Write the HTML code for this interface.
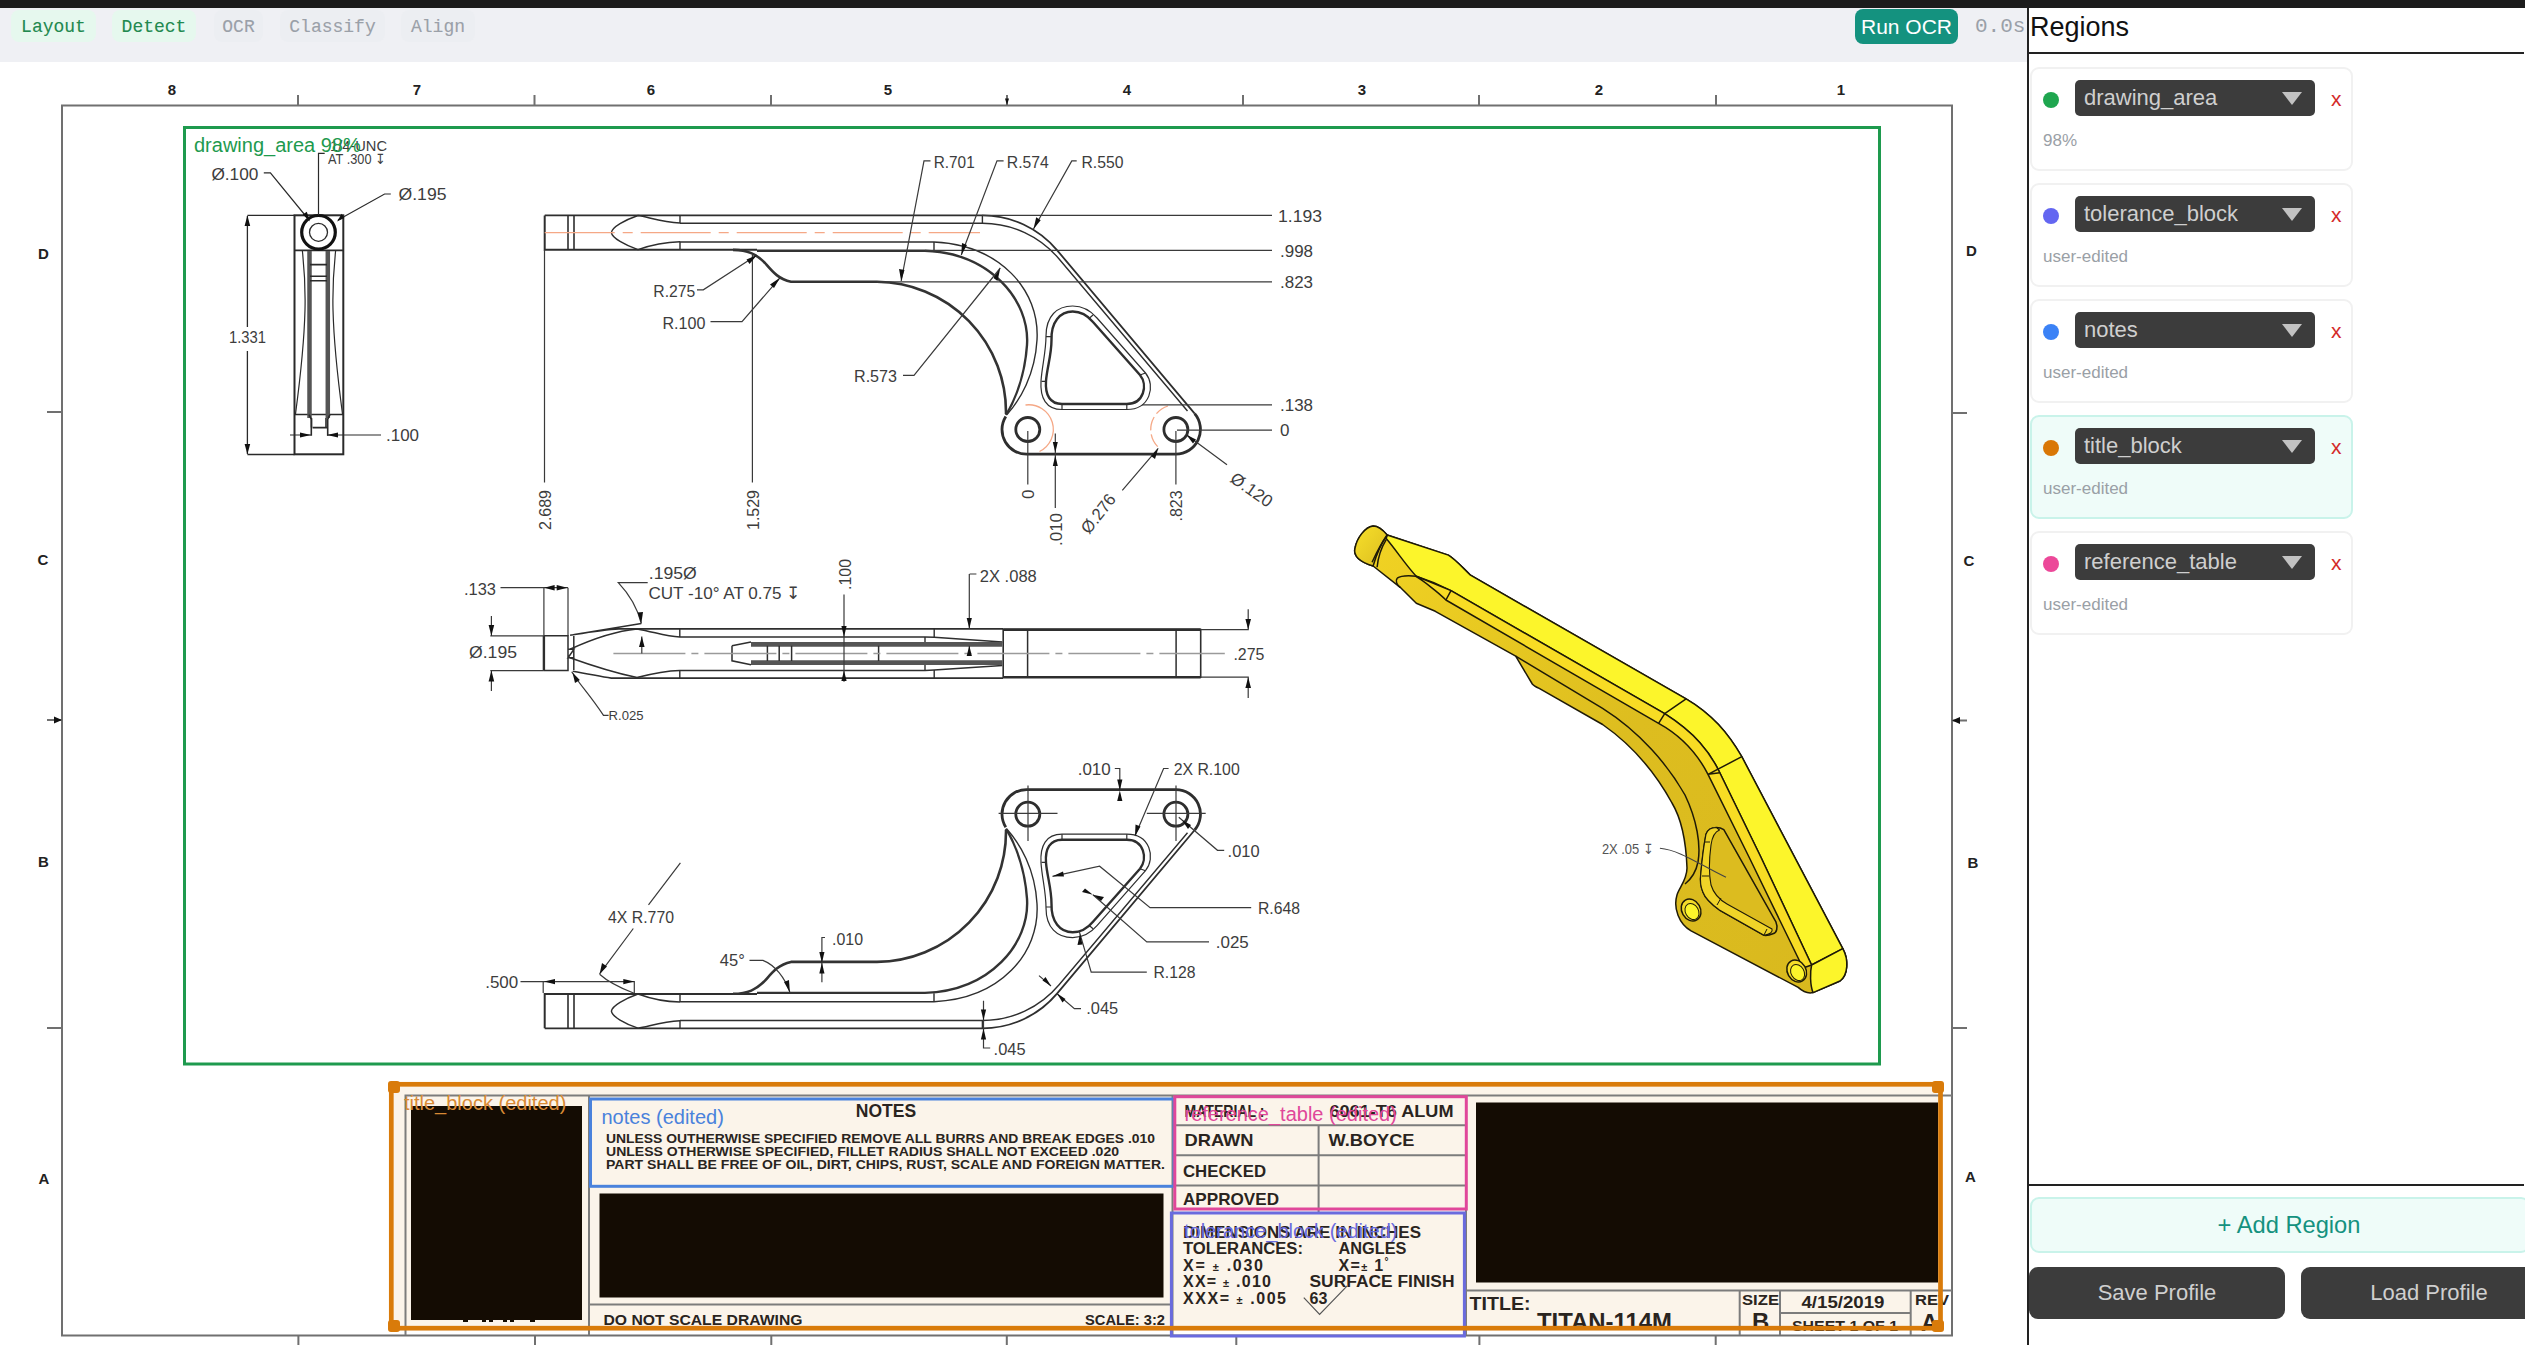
<!DOCTYPE html>
<html><head><meta charset="utf-8">
<style>
*{box-sizing:border-box;margin:0;padding:0}
html,body{width:2525px;height:1345px;overflow:hidden;background:#fff;font-family:"Liberation Sans",sans-serif}
.abs{position:absolute}
#topbar{left:0;top:0;width:2525px;height:8px;background:#1c1c1c}
#toolbar{left:0;top:8px;width:2028px;height:54px;background:#eff0f4}
.tb{position:absolute;top:10px;height:32px;border-radius:8px;font-family:"Liberation Mono",monospace;font-size:18px;line-height:35px;text-align:center;-webkit-text-stroke:0.1px currentColor}
.tb.on{background:#e6f8ee;color:#22894f}
.tb.off{background:#eceef2;color:#9aa0a8}
#runocr{left:1855px;top:9px;width:103px;height:35px;border-radius:8px;background:#14927f;color:#fff;font-size:21px;line-height:35px;text-align:center}
#time{left:1975px;top:9px;height:35px;line-height:35px;font-family:"Liberation Mono",monospace;font-size:21px;color:#9aa0a8;width:53px;overflow:hidden;white-space:nowrap}
#sidebar{left:2027px;top:8px;width:498px;height:1337px;background:#fff;border-left:2px solid #222}
#reghead{left:2030px;top:8px;font-size:27px;color:#111;line-height:38px}
#regline{left:2029px;top:52px;width:495px;height:2px;background:#222}
.card{position:absolute;left:2030px;width:323px;height:104px;border:2px solid #f1f1f1;border-radius:9px;background:#fff}
.card.sel{background:#effcf9;border-color:#c9f3ea}
.dot{position:absolute;left:11px;top:23px;width:16px;height:16px;border-radius:50%}
.sel2{position:absolute;left:43px;top:11px;width:240px;height:36px;border-radius:5px;background:#3c3c3c;color:#cfcfcf;font-size:22px;line-height:36px;padding-left:9px}
.tri{position:absolute;left:207px;top:12px;width:0;height:0;border-left:10px solid transparent;border-right:10px solid transparent;border-top:13px solid #c2c2c2}
.x{position:absolute;left:299px;top:12px;color:#d42a2a;font-size:21px;line-height:36px}
.sub{position:absolute;left:11px;top:60px;color:#9aa0a6;font-size:17px;line-height:24px}
#botline{left:2029px;top:1184px;width:495px;height:2px;background:#222}
#addreg{left:2030px;top:1197px;width:500px;height:56px;border:2px solid #c9f3ea;border-radius:9px;background:#effcf9;color:#14927f;font-size:23.7px;line-height:52px;text-align:center;padding-left:18px}
.pbtn{position:absolute;top:1267px;height:52px;border-radius:9px;background:#3c3c3c;color:#cfcfcf;font-size:22px;line-height:52px;text-align:center}
svg text{font-family:"Liberation Sans",sans-serif}
</style></head><body>
<!-- DRAWING -->
<svg class="abs" style="left:0;top:0" width="2028" height="1345" viewBox="0 0 2028 1345">
<g id="frame" fill="none" stroke="#707070" stroke-width="2">
  <path d="M62 1335.5 V105.5 H1952 V1335.5 Z"/>
  <path d="M298 95V105M534.5 95V105M771 95V105M1243 95V105M1479 95V105M1716 95V105M1007 95V105"/>
  <path d="M298.4 1335V1345M535 1335V1345M771.3 1335V1345M1006.8 1335V1345M1236.3 1335V1345M1479.4 1335V1345M1715.7 1335V1345"/>
  <path d="M47 412H62M47 720H62M47 1028H62M1952 413H1967M1952 720.5H1967M1952 1028H1967"/>
</g>
<g fill="#111"><path d="M1005 98.5L1009 98.5L1007 105Z"/><path d="M54 716.5L62 720L54 723.5Z"/><path d="M1960 717L1952 720.5L1960 724Z"/></g>
<g font-size="15" font-weight="bold" fill="#222" text-anchor="middle">
  <text x="172" y="95">8</text><text x="417" y="95">7</text><text x="651" y="95">6</text><text x="888" y="95">5</text>
  <text x="1127" y="95">4</text><text x="1362" y="95">3</text><text x="1599" y="95">2</text><text x="1841" y="95">1</text>
  <text x="43.5" y="259">D</text><text x="43" y="565">C</text><text x="43.5" y="867">B</text><text x="44" y="1184">A</text>
  <text x="1971.5" y="255.5">D</text><text x="1969" y="566">C</text><text x="1973" y="868">B</text><text x="1970.5" y="1181.5">A</text>
</g>


<!-- SIDE VIEW -->
<g id="side" fill="none" stroke="#2a2a2a" stroke-width="1.6">
  <rect x="294.5" y="215.3" width="48.8" height="239" stroke-width="2"/>
  <path d="M294.5 250.4H343.3M294.5 414.5H343.3"/>
  <circle cx="318.5" cy="232.3" r="16.8" stroke-width="3.2" stroke="#111"/>
  <circle cx="318.5" cy="232.3" r="9" stroke-width="1.3"/>
  <path d="M309.5 251V418M327.8 251V418" stroke-width="4.5" stroke="#555"/><path d="M311.5 418V427.6M326 418V427.6" stroke-width="1.6"/>
  <path d="M312.6 427.6H327.5M309 414.5L311.3 419.3V435.8M330 414.5L327.7 419.3V435.8M310 264.6H327M310 276.2H327M310 280.8H327" stroke-width="1.6"/>
  <path d="M302.4 251C306 285 308 320 295.5 414M335.6 251C332 285 330 320 342.5 414" stroke-width="1.2"/>
  <path d="M247.4 215.3H294.5M247.4 454.5H294.5M247.4 216V327M247.4 351V454" stroke-width="1.3"/>
  <path d="M318.5 215V153.3H324.7M263.8 172.8H270.4L309 220M390.8 194H384.6L338 220M290 435H311M327 435H381" stroke-width="1.2"/>
</g>
<g fill="#111">
  <path d="M247.4 215.5L244.6 226L250.2 226Z"/><path d="M247.4 454.3L244.6 444L250.2 444Z"/>
  <path d="M311 435L300 432.5V437.5Z"/><path d="M327 435L338 432.5V437.5Z"/>
  <path d="M310 221.5L302.8 214.5L306.8 211.7Z"/><path d="M337 221.5L341.7 213.7L344.3 218Z"/>
</g>
<g font-size="17" fill="#3d3d3d">
  <text x="229" y="343.3" textLength="37" lengthAdjust="spacingAndGlyphs">1.331</text>
  <text x="386" y="441" textLength="33" lengthAdjust="spacingAndGlyphs">.100</text>
  <text x="211.4" y="179.5" textLength="47" lengthAdjust="spacingAndGlyphs">Ø.100</text>
  <text x="398.5" y="200.4" textLength="48" lengthAdjust="spacingAndGlyphs">Ø.195</text>
  <text x="328" y="163.8" font-size="14" textLength="58" lengthAdjust="spacingAndGlyphs">AT .300 ↧</text>
  <text x="330" y="150.5" font-size="14" textLength="57" lengthAdjust="spacingAndGlyphs">1/4-UNC</text>
</g>

<!-- TOP VIEW -->
<g id="part" fill="none" stroke="#2e2e2e" stroke-width="1.8">
  <path d="M544.7 215.4H982.4A97.4 97.4 0 0 1 1057 250.1L1194.7 413.7"/><path d="M1194.7 413.7A24.6 24.6 0 0 1 1175.9 454.1H1027.8A24.6 24.6 0 0 1 1005.8 416.4" stroke-width="2.8"/>
  <path d="M544.7 215.4V249.7H757" stroke-width="2"/>
  <path d="M568 215.4V249.7M574 215.4V249.7" stroke-width="1.6"/>
  <path d="M680 223C662 222 648 217 638 215.5C625 220 612 227 611.4 232.6C612 238 625 245 638 249.7C648 246 662 242 680 241.7" stroke-width="1.4"/>
  <path d="M680 215.5V223M680 241.7V249.7M982.4 215.4V223.3M934 242.1V250.4" stroke-width="1.4"/>
  <path d="M680 223.2H982.4A100.2 100.2 0 0 1 1059.1 259L1187.5 411" stroke-width="1.4"/>
  <path d="M680 242H934C1000 245 1040 290 1037 340C1035 375 1020 400 1007 414.5" stroke-width="1.4"/>
  <path d="M733 249.9C748 250 756 254 765 263C772 271 778 279 791 281.8H877A130.3 130.3 0 0 1 1006 414" stroke-width="2.6" stroke="#333"/>
  <path d="M757 250.8H924.9C990 253 1030 300 1027 345C1025 375 1015 400 1006 415" stroke-width="2.4" stroke="#333"/>
  <path d="M1051.5 340C1051 322 1060 311.5 1072.7 311.5C1082 311.5 1088 316 1093 322L1140 375C1148 385 1144 404 1126.8 404H1062C1050 404 1045 395 1046 381C1047 368 1051.5 355 1051.5 340Z" stroke-width="2.4"/>
  <path d="M1046 336C1046 316 1057 306 1072.7 306C1084 306 1091 311 1097 318L1145.5 373C1156 386 1150 409.5 1126.8 409.5H1062C1046 409.5 1040 398 1041 381C1042 366 1046 352 1046 336Z" stroke-width="1.2"/>
  <path d="M1062 404V409.5M1126.8 404V409.5M1046 336.7H1051.6M1041.5 381.3H1046.5M1089 318.5L1093 315M1140 375L1145.5 373" stroke-width="1.2"/>
  <circle cx="1027.8" cy="429.5" r="12" stroke-width="2.8"/>
  <circle cx="1175.9" cy="429.5" r="12" stroke-width="2.8"/>
</g>
<use href="#part" transform="matrix(1 0 0 -1 0 1243.7)"/>
<g fill="none" stroke="#f5a886" stroke-width="1.3">
  <path d="M544.7 232.6H980" stroke-width="1.4" stroke-dasharray="70 8 10 8"/>
  <path d="M1025.5 405A24.6 24.6 0 0 1 1039.5 451.5"/>
  <path d="M1168 406A24.6 24.6 0 0 0 1159.6 448.4" stroke-dasharray="14 4"/>
</g>
<g id="topdims" fill="none" stroke="#3a3a3a" stroke-width="1.2">
  <path d="M982 215.4H1272M925 250.4H1272M877 281.8H1272M1142 404.8H1272M1177 430.1H1272M903 375.3H914L1000.3 268"/>
  <path d="M544.5 250V482.5M752.4 255V482.5M1027.8 431V484.4M1055.3 433.4V508M1175.9 431V484.4"/>
  <path d="M930.5 160.9H924L901.2 281M1003.6 160.9H997L961.3 255M1076.7 160.9H1071.8L1033.5 229"/>
  <path d="M697 289.8H703.3L757 255M710.5 321.7H742L780 277.8M1186.4 434.7L1227 464.8M1158.2 448.4L1122.3 490.3"/>
</g>
<g fill="#111">
  <path d="M901.2 281L899 269L904.5 270Z"/><path d="M961.3 255L962 243L967 245Z"/><path d="M1033.5 229L1036.2 217.2L1040.7 220.2Z"/>
  <path d="M757 255L746.5 259.5L749.5 264Z"/><path d="M780 277.8L770 284.5L774 288Z"/>
  <path d="M1055.3 452.5L1052.8 442H1057.8Z"/><path d="M1055.3 455.5L1052.8 466H1057.8Z"/><path d="M1000.3 268L993.5 278L997.5 281Z"/><path d="M1186.4 434.7L1196 439.5L1193 443.5Z"/><path d="M1158.2 448.4L1151 456L1155 459Z"/>
</g>
<g font-size="17" fill="#3d3d3d">
  <text x="933.7" y="168.3" textLength="41" lengthAdjust="spacingAndGlyphs">R.701</text>
  <text x="1006.8" y="168.3" textLength="42" lengthAdjust="spacingAndGlyphs">R.574</text>
  <text x="1081.5" y="168.3" textLength="42" lengthAdjust="spacingAndGlyphs">R.550</text>
  <text x="1278" y="222" textLength="44" lengthAdjust="spacingAndGlyphs">1.193</text>
  <text x="1280" y="256.7" textLength="33" lengthAdjust="spacingAndGlyphs">.998</text>
  <text x="1280" y="287.6" textLength="33" lengthAdjust="spacingAndGlyphs">.823</text>
  <text x="1280" y="411" textLength="33" lengthAdjust="spacingAndGlyphs">.138</text>
  <text x="1280" y="435.6">0</text>
  <text x="653.3" y="297.3" textLength="42" lengthAdjust="spacingAndGlyphs">R.275</text>
  <text x="662.4" y="328.8" textLength="43" lengthAdjust="spacingAndGlyphs">R.100</text>
  <text x="854" y="382" textLength="43" lengthAdjust="spacingAndGlyphs">R.573</text>
  <text transform="translate(550.5 530) rotate(-90)" textLength="40" lengthAdjust="spacingAndGlyphs">2.689</text>
  <text transform="translate(758.5 530) rotate(-90)" textLength="40" lengthAdjust="spacingAndGlyphs">1.529</text>
  <text transform="translate(1034 499) rotate(-90)">0</text>
  <text transform="translate(1061.5 546) rotate(-90)" textLength="33" lengthAdjust="spacingAndGlyphs">.010</text>
  <text transform="translate(1182 521.5) rotate(-90)" textLength="31" lengthAdjust="spacingAndGlyphs">.823</text>
  <text transform="translate(1089 535) rotate(-52)" textLength="45" lengthAdjust="spacingAndGlyphs">Ø.276</text>
  <text transform="translate(1229 481) rotate(35)" textLength="47" lengthAdjust="spacingAndGlyphs">Ø.120</text>
</g>


<!-- MIDDLE VIEW -->
<g id="mid" fill="none" stroke="#2e2e2e" stroke-width="1.5">
  <path d="M543.9 635.8V670.6" stroke-width="2.4"/>
  <path d="M543.9 635.8H568V670.6H543.9M573.8 636V670M568 649.2H574L568 657.8H574"/>
  <path d="M570.1 635.3L641.3 623.5M572.8 634.8C590 632 605 629.5 618.8 628.9H1003.2M572.8 671.2C590 674 600 676.5 611.3 678.1H1003.2" stroke-width="1.6"/>
  <path d="M570 649.2C590 640 615 631 637 628.9C655 632 665 636.5 679.8 636.9H925L934.2 637.3L1002.3 641.9" stroke-width="1.5"/>
  <path d="M570 657.8C590 665 615 673 637 677.6C655 673 665 671 679.8 670.6H925L934.2 670L1002.3 665.4" stroke-width="1.5"/>
  <path d="M679.8 628.9V636.9M679.8 670.6V678.3M934.2 628.5V637M934.2 670V678.3M925 637V645M925 662V670" stroke-width="1.4"/>
  <path d="M751 644.4H1002.3M751 662.6H1002.3" stroke-width="4.7" stroke="#555"/>
  <path d="M732 645.8V660.8L751 664.8M732 645.8L751 642.1M767.4 645.8V661M779.2 645.8V661M791.6 645.8V661M878.6 645.8V661" stroke-width="1.5"/>
  <path d="M1003.2 629.6H1200.7V677.2H1003.2Z" stroke-width="1.6"/>
  <path d="M1003.2 629.6H1200.7M1003.2 677.2H1200.7" stroke-width="2.6"/>
  <path d="M1027.6 629.6V677.2M1176.1 629.6V677.2" stroke-width="1.5"/>
  <path d="M613.4 653.5H1224.8" stroke="#9a9a9a" stroke-width="1.3" stroke-dasharray="72 6 7 6"/>
</g>
<g fill="none" stroke="#3a3a3a" stroke-width="1.2">
  <path d="M500.5 587.7H568M543.9 587.7V635.8M568 587.7V635.8M491.4 616V635.8M491.4 670.6V691M490.3 635.8H543.9M490.3 670.6H543.9"/>
  <path d="M647.7 582.6H618.3C630 595 638 610 641.3 623.5M641.8 653.5V636.4M571.7 671.7C580 685 590 695 603.5 715.4H608.6"/>
  <path d="M844 594.5V681.8M969.3 574V629M969.3 655V645.8M976.4 574H969.6"/>
  <path d="M1200.7 629.6H1248.2V609.3M1200.7 677.2H1248.2V698.1"/>
</g>
<g fill="#111">
  <path d="M544.2 587.7L554.6 585V590.4Z"/><path d="M567.4 587.7L556.7 585V590.4Z"/>
  <path d="M491.4 635.8L488.6 625H494.2Z"/><path d="M491.4 670.6L488.6 681.4H494.2Z"/>
  <path d="M641.3 623.5L637.5 612.5L643 612Z"/><path d="M641.8 636.4L639 647H644.6Z"/>
  <path d="M572.5 672.5L575 683L579.8 680Z"/>
  <path d="M844 636.9L841.4 626H846.6Z"/><path d="M844 670.4L841.4 681H846.6Z"/>
  <path d="M969.3 628.5L966.7 618H971.9Z"/><path d="M969.3 645.8L966.7 656H971.9Z"/>
  <path d="M1248.2 629.6L1245.4 619H1251Z"/><path d="M1248.2 677.2L1245.4 688H1251Z"/>
</g>
<g font-size="17" fill="#3d3d3d">
  <text x="464" y="594.6" textLength="32" lengthAdjust="spacingAndGlyphs">.133</text>
  <text x="469" y="658.3" textLength="48" lengthAdjust="spacingAndGlyphs">Ø.195</text>
  <text x="648.8" y="579.1" textLength="48" lengthAdjust="spacingAndGlyphs">.195Ø</text>
  <text x="648.4" y="598.6" textLength="152" lengthAdjust="spacingAndGlyphs">CUT -10° AT  0.75 ↧</text>
  <text x="608.6" y="719.5" font-size="13" textLength="35" lengthAdjust="spacingAndGlyphs">R.025</text>
  <text transform="translate(851 590) rotate(-90)" textLength="31" lengthAdjust="spacingAndGlyphs">.100</text>
  <text x="979.8" y="581.6" textLength="57" lengthAdjust="spacingAndGlyphs">2X .088</text>
  <text x="1233.4" y="660.1" textLength="31" lengthAdjust="spacingAndGlyphs">.275</text>
</g>


<!-- BOTTOM VIEW DIMS -->
<g fill="none" stroke="#3a3a3a" stroke-width="1.2">
  <path d="M998.6 813.3H1057.5M1146.8 813.3H1205.7M1028 785.4V840.9M1176 785.4V840.9"/>
  <path d="M633.3 928.5L599.6 973.9M648.5 904.9L680.4 862.8"/>
  <path d="M520.5 981.6H634.3V993M543.2 981V993M599.6 974.2C606 980 618 987 633.5 993"/>
  <path d="M749.5 960.4H762.9C775 965 785 978 789.9 992.4"/>
  <path d="M825 937.5H821.9V982.3"/>
  <path d="M1114.8 768.5H1119.8V790.5M1168.6 768.5H1163.6L1135 835.9M1224.2 850.3H1217.5L1178.8 817.3"/>
  <path d="M1251.2 907.6H1150.1L1099.6 866.2L1052.5 876.3M1209 941.9H1146.8L1092.9 894.8M1146.8 972.2H1091.2L1079.4 931.8"/>
  <path d="M1081 1008.6H1074.4L1056.7 993.5M1051 986L1039 975.6M990.2 1048H983.5V1000.8"/>
</g>
<g fill="#111">
  <path d="M599.6 973.9L602 963L607 966.5Z"/><path d="M544 981.6L555 979V984.2Z"/><path d="M634.3 981.6L623.3 979V984.2Z"/>
  <path d="M789.9 992.4L784 982L789 980Z"/>
  <path d="M821.9 962.8L819.3 952H824.5Z"/><path d="M821.9 962.8L819.3 973.5H824.5Z"/>
  <path d="M1119.8 790.4L1117.2 779.5H1122.4Z"/><path d="M1119.8 790.4L1117.2 801H1122.4Z"/>
  <path d="M1135 835.9L1135.5 824.5L1140.5 826.5Z"/><path d="M1182 820L1191 825L1188 829Z"/>
  <path d="M1052.5 876.3L1063 871.5L1064 876.5Z"/><path d="M1092.9 894.8L1101 901L1104 897Z"/><path d="M1092.9 894.8L1085 888.5L1082 892Z"/>
  <path d="M1080 933.5L1077.5 945L1082.5 944.5Z"/>
  <path d="M1051 986L1042.5 980.5L1045.5 977Z"/><path d="M1057 993.5L1065.5 999L1062.5 1002.5Z"/>
  <path d="M983.5 1020.2L980.9 1009.5H986.1Z"/><path d="M983.5 1028.5L980.9 1039.5H986.1Z"/>
</g>
<g font-size="17" fill="#3d3d3d">
  <text x="608" y="923.4" textLength="66" lengthAdjust="spacingAndGlyphs">4X R.770</text>
  <text x="485.2" y="988.4" textLength="33" lengthAdjust="spacingAndGlyphs">.500</text>
  <text x="719.8" y="965.5" textLength="25" lengthAdjust="spacingAndGlyphs">45°</text>
  <text x="832" y="944.6" textLength="31" lengthAdjust="spacingAndGlyphs">.010</text>
  <text x="1077.7" y="775.3" textLength="33" lengthAdjust="spacingAndGlyphs">.010</text>
  <text x="1173.7" y="775.3" textLength="66" lengthAdjust="spacingAndGlyphs">2X R.100</text>
  <text x="1227.6" y="857" textLength="32" lengthAdjust="spacingAndGlyphs">.010</text>
  <text x="1257.9" y="914.3" textLength="42" lengthAdjust="spacingAndGlyphs">R.648</text>
  <text x="1215.8" y="948" textLength="33" lengthAdjust="spacingAndGlyphs">.025</text>
  <text x="1153.5" y="978.3" textLength="42" lengthAdjust="spacingAndGlyphs">R.128</text>
  <text x="1086.2" y="1014.3" textLength="32" lengthAdjust="spacingAndGlyphs">.045</text>
  <text x="993.6" y="1054.7" textLength="32" lengthAdjust="spacingAndGlyphs">.045</text>
</g>


<!-- ISO PART -->
<defs>
  <linearGradient id="gside" x1="0" y1="0" x2="1" y2="1">
    <stop offset="0" stop-color="#f2d423"/><stop offset="0.5" stop-color="#ddbd1f"/><stop offset="1" stop-color="#d9b91e"/>
  </linearGradient>
  <linearGradient id="gcap" x1="0" y1="0" x2="1" y2="1">
    <stop offset="0" stop-color="#f7e02a"/><stop offset="1" stop-color="#dcbd20"/>
  </linearGradient>
</defs>
<g id="iso" stroke="#1e1a08" stroke-width="1.5" stroke-linejoin="round">
  <path fill="url(#gside)" d="M1373.1 526C1378 526 1383 530 1387.2 535L1448.4 555.1C1455 559 1462 567 1470.5 575.2L1686.1 698.8C1712 714 1728 733 1741.8 756.7L1842.8 948.7C1849 960 1848 975 1840 981L1813 992.6C1806 994 1801 990 1798.2 987.4L1691.1 930.9C1679 924 1673 908 1677 895C1679 888 1687 880 1687 868C1686 840 1681 818 1672 803C1655 772 1632 745 1602.6 724.5L1539.2 688.4C1535 686.5 1533.5 685.5 1532.3 684L1515.7 656.2L1435.3 611.3L1416.3 603.3L1400.2 587.3L1373.1 566C1360 562 1353 556 1355 548C1357 538 1365 527 1373.1 526Z"/>
  <path fill="#fcf52b" d="M1387.2 535L1448.4 555.1C1455 559 1462 567 1470.5 575.2L1686.1 698.8C1712 714 1728 733 1741.8 756.7L1842.8 948.7L1811.6 965L1760.8 857L1719.8 772.8C1710 752 1695 733 1664.7 713.7L1451 590.6C1440 585 1428 580 1416.3 576.2C1408 568 1396 550 1386.2 538.6Z"/>
  <path fill="#f8dc24" d="M1416.3 576.2L1451 590.6L1664.7 713.7C1695 733 1710 752 1719.8 772.8L1760.8 857L1811.6 965L1803 968L1749 857L1708 774.3C1697 753 1680 735 1658.6 723.3L1445.9 600C1438 592 1422 580 1416.3 576.7Z"/>
  <path fill="#fcf52b" d="M1811.6 965L1842.8 948.7C1849 960 1848 975 1840 981L1813 992.6C1810 985 1810 972 1811.6 965Z"/>
  <path fill="url(#gcap)" d="M1387.2 535C1380 545 1376 556 1373.1 566C1360 562 1353 556 1355 548C1357 538 1365 527 1373.1 526C1378 526 1383 530 1387.2 535Z"/>
  <path fill="none" d="M1387.2 535C1380 545 1375 556 1372.1 562.2M1386.2 539.6C1381 548 1378 558 1377.1 567.2"/>
  <path fill="none" d="M1397.2 578.2C1401 575.5 1410 575.5 1416.3 576.2M1397.2 578.2C1395 581 1397 585 1400.2 587.3"/>
  <path fill="none" d="M1451 590.6L1445.9 600M1664.7 713.7L1686.1 698.8M1658.6 723.3L1664.7 713.7M1708 774.3L1741.8 756.7M1708 774.3L1719.8 772.8"/>
  <path fill="none" d="M1515.7 656.2L1602.6 708.4C1640 732 1668 765 1685 795C1697 820 1701 845 1698 862C1696 872 1690 880 1685 884"/>
  <path fill="#dcbc1f" d="M1706 834.2C1708 829 1712 827.5 1716.4 827.5C1720 827.5 1722 828.5 1723.8 829.7L1775.9 921.9C1778 927 1777 933 1772.9 933.8C1769 935.5 1766 935.5 1764 935.3L1719.4 910C1710 903 1705 898 1703 892.2C1700 885 1700 880 1700.8 874.3C1702 860 1704 845 1706 834.2Z"/>
  <path fill="#f0d428" stroke-width="1.1" d="M1706 834.2C1708 829 1712 827.5 1716.4 827.5L1719.5 830C1714 832 1712 838 1711 845C1709 860 1709 875 1711 885C1714 895 1720 900 1727 904L1772 929C1773 932 1770 934.5 1764 935.3L1719.4 910C1710 903 1705 898 1703 892.2C1700 885 1700 880 1700.8 874.3C1702 860 1704 845 1706 834.2Z"/>
  <path fill="none" stroke-width="1" d="M1704 842H1710M1702 876H1709M1717 905L1721 898M1764 935L1767 929"/>
  <ellipse cx="1691.1" cy="910" rx="9.3" ry="11.5" transform="rotate(-30 1691.1 910)" fill="#f4dc2a"/>
  <ellipse cx="1692" cy="911.5" rx="6.5" ry="8.5" transform="rotate(-30 1692 911.5)" fill="#fcf52b" stroke-width="1"/>
  <ellipse cx="1796.7" cy="971" rx="9.3" ry="11.5" transform="rotate(-30 1796.7 971)" fill="#f4dc2a"/>
  <ellipse cx="1797.6" cy="972.5" rx="6.5" ry="8.5" transform="rotate(-30 1797.6 972.5)" fill="#fcf52b" stroke-width="1"/>
</g>
<path d="M1659.9 848.3C1680 850 1700 865 1726 877.3" fill="none" stroke="#444" stroke-width="1.1"/>
<text x="1601.9" y="853.5" font-size="14" fill="#555" textLength="52" lengthAdjust="spacingAndGlyphs">2X .05 ↧</text>

<!-- TITLE BLOCK -->
<rect x="391" y="1084" width="1550" height="246" fill="#fbf4ea"/>
<g fill="#140c03">
  <rect x="411" y="1106" width="171" height="214"/>
  <rect x="599.5" y="1193.5" width="564" height="104"/>
  <rect x="1476" y="1102.5" width="462" height="180"/>
  <path d="M463 1319h5v3h-5zM482 1319h4v3h-4zM489 1319h4v3h-4zM503 1319h4v3h-4zM510 1319h4v3h-4zM530 1319h5v3h-5z"/>
</g>
<g fill="none" stroke="#7c7c7c" stroke-width="2">
  <path d="M405.5 1335V1095.5H1952M589 1095.5V1335M589 1304.5H1172M1172.5 1095.5V1335M1466 1095.5V1335"/>
  <path d="M1172 1125.3H1466M1172 1155.3H1466M1172 1185.4H1466M1172 1213H1466M1318.6 1125.3V1212"/>
  <path d="M1466 1290.4H1952M1739.7 1290.4V1335M1780 1290.4V1335M1910.7 1290.4V1335M1780 1312.9H1910.7"/>
</g>
<g font-weight="bold" fill="#2a2420">
  <text x="886" y="1117" font-size="17.5" text-anchor="middle">NOTES</text>
  <text x="606" y="1143" font-size="13.2" textLength="549" lengthAdjust="spacingAndGlyphs">UNLESS OUTHERWISE SPECIFIED REMOVE ALL BURRS AND BREAK EDGES .010</text>
  <text x="606" y="1156" font-size="13.2" textLength="513" lengthAdjust="spacingAndGlyphs">UNLESS OTHERWISE SPECIFIED, FILLET RADIUS SHALL NOT EXCEED .020</text>
  <text x="606" y="1169" font-size="13.2" textLength="559" lengthAdjust="spacingAndGlyphs">PART SHALL BE FREE OF OIL, DIRT, CHIPS, RUST, SCALE AND FOREIGN MATTER.</text>
  <text x="603.5" y="1325" font-size="15.5" textLength="199" lengthAdjust="spacingAndGlyphs">DO NOT SCALE DRAWING</text>
  <text x="1085" y="1325" font-size="15.5" textLength="80" lengthAdjust="spacingAndGlyphs">SCALE: 3:2</text>
  <text x="1184.5" y="1116.5" font-size="17" textLength="80" lengthAdjust="spacingAndGlyphs">MATERIAL :</text>
  <text x="1329.5" y="1116.5" font-size="17" textLength="124" lengthAdjust="spacingAndGlyphs">6061-T6 ALUM</text>
  <text x="1184.5" y="1146" font-size="17" textLength="69" lengthAdjust="spacingAndGlyphs">DRAWN</text>
  <text x="1328.5" y="1146" font-size="17" textLength="86" lengthAdjust="spacingAndGlyphs">W.BOYCE</text>
  <text x="1183" y="1176.5" font-size="17" textLength="83" lengthAdjust="spacingAndGlyphs">CHECKED</text>
  <text x="1183" y="1205" font-size="17" textLength="96" lengthAdjust="spacingAndGlyphs">APPROVED</text>
  <text x="1183" y="1237.6" font-size="16" textLength="238" lengthAdjust="spacingAndGlyphs">DIMENSIONS ARE IN INCHES</text>
  <text x="1183" y="1254.3" font-size="16" textLength="120" lengthAdjust="spacingAndGlyphs">TOLERANCES:</text>
  <text x="1338.5" y="1254.3" font-size="16" textLength="68" lengthAdjust="spacingAndGlyphs">ANGLES</text>
  <text x="1183" y="1270.7" font-size="16" textLength="80" lengthAdjust="spacing">X= <tspan font-size="11">±</tspan> .030</text>
  <text x="1338.5" y="1270.7" font-size="16" textLength="50" lengthAdjust="spacing">X=<tspan font-size="11">±</tspan> 1<tspan font-size="10" dy="-6">°</tspan></text>
  <text x="1183" y="1287.2" font-size="16" textLength="88" lengthAdjust="spacing">XX= <tspan font-size="11">±</tspan> .010</text>
  <text x="1309.5" y="1287.2" font-size="16" textLength="145" lengthAdjust="spacingAndGlyphs">SURFACE FINISH</text>
  <text x="1183" y="1304.2" font-size="16" textLength="103" lengthAdjust="spacing">XXX= <tspan font-size="11">±</tspan> .005</text>
  <text x="1309.5" y="1304.2" font-size="16">63</text>
  <text x="1469.5" y="1309.6" font-size="18" textLength="61" lengthAdjust="spacingAndGlyphs">TITLE:</text>
  <text x="1537" y="1330" font-size="23" textLength="135" lengthAdjust="spacingAndGlyphs">TITAN-114M</text>
  <text x="1742" y="1305" font-size="15" textLength="37" lengthAdjust="spacingAndGlyphs">SIZE</text>
  <text x="1752" y="1330" font-size="24">B</text>
  <text x="1801.5" y="1307.5" font-size="17" textLength="83" lengthAdjust="spacingAndGlyphs">4/15/2019</text>
  <text x="1792" y="1331" font-size="14" textLength="106" lengthAdjust="spacingAndGlyphs">SHEET 1 OF 1</text>
  <text x="1915" y="1305" font-size="15" textLength="34" lengthAdjust="spacingAndGlyphs">REV</text>
  <text x="1921" y="1331" font-size="24">A</text>
</g>
<path d="M1303.8 1297.7L1319.6 1314.4L1347.2 1285.9" fill="none" stroke="#555" stroke-width="1.2"/>

<!-- OVERLAYS -->
<g fill="none">
  <rect x="184.5" y="127.5" width="1695" height="936.5" stroke="#1e9a4e" stroke-width="3"/>
  <rect x="590.5" y="1099" width="583.5" height="87.3" stroke="#4a82dc" stroke-width="3"/>
  <rect x="1174.8" y="1096.7" width="291.5" height="112.3" stroke="#e0479a" stroke-width="3"/>
  <rect x="1171.4" y="1213" width="293" height="123" stroke="#6a6bde" stroke-width="3"/>
  <rect x="391.3" y="1084.3" width="1549.2" height="243.9" stroke="#d97b0a" stroke-width="4.7"/>
</g>
<g fill="#d97b0a">
  <rect x="388" y="1081" width="12" height="12" rx="3"/><rect x="1932" y="1081" width="12" height="12" rx="3"/>
  <rect x="388" y="1320" width="12" height="12" rx="3"/><rect x="1932" y="1320" width="12" height="12" rx="3"/>
</g>
<g font-size="20">
  <text x="194" y="152" fill="#1e9a4e">drawing_area 98%</text>
  <text x="404" y="1109.5" fill="#d98a35">title_block (edited)</text>
  <text x="601.5" y="1123.5" fill="#4a82dc">notes (edited)</text>
  <text x="1184.5" y="1120.5" fill="#e0479a">reference_table (edited)</text>
  <text x="1184" y="1237.6" fill="#6a6bde">tolerance_block (edited)</text>
</g>
</svg>
<div id="topbar" class="abs"></div>
<div id="toolbar" class="abs"></div>
<div class="tb on" style="left:11px;width:85px">Layout</div>
<div class="tb on" style="left:112px;width:84px">Detect</div>
<div class="tb off" style="left:214px;width:49px">OCR</div>
<div class="tb off" style="left:280px;width:105px">Classify</div>
<div class="tb off" style="left:401px;width:74px">Align</div>
<div id="runocr" class="abs">Run OCR</div>
<div id="time" class="abs">0.0s</div>



<div id="sidebar" class="abs"></div>
<div id="reghead" class="abs">Regions</div>
<div id="regline" class="abs"></div>

<div class="card" style="top:67px"><div class="dot" style="background:#1fa64f"></div><div class="sel2">drawing_area<div class="tri"></div></div><div class="x">x</div><div class="sub">98%</div></div>
<div class="card" style="top:183px"><div class="dot" style="background:#6366f1"></div><div class="sel2">tolerance_block<div class="tri"></div></div><div class="x">x</div><div class="sub">user-edited</div></div>
<div class="card" style="top:299px"><div class="dot" style="background:#3b82f6"></div><div class="sel2">notes<div class="tri"></div></div><div class="x">x</div><div class="sub">user-edited</div></div>
<div class="card sel" style="top:415px"><div class="dot" style="background:#d97706"></div><div class="sel2">title_block<div class="tri"></div></div><div class="x">x</div><div class="sub">user-edited</div></div>
<div class="card" style="top:531px"><div class="dot" style="background:#ec4899"></div><div class="sel2">reference_table<div class="tri"></div></div><div class="x">x</div><div class="sub">user-edited</div></div>

<div id="botline" class="abs"></div>
<div id="addreg" class="abs">+ Add Region</div>
<div class="pbtn" style="left:2029px;width:256px">Save Profile</div>
<div class="pbtn" style="left:2301px;width:256px">Load Profile</div>
</body></html>
